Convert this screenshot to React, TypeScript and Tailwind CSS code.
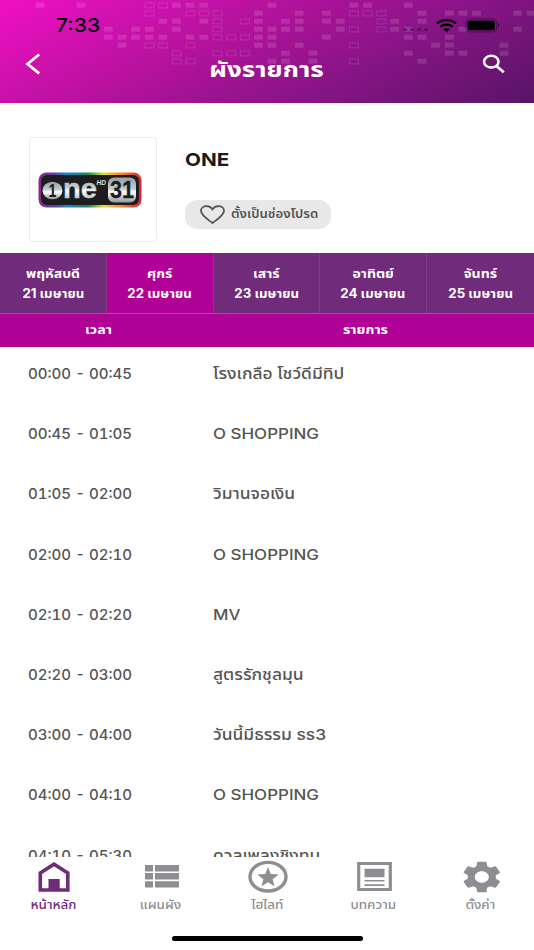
import React from "react";
import clsx from "clsx";

interface Day {
  name: string;
  date: string;
  active?: boolean;
}
interface Program {
  time: string;
  title: string;
}

const days: Day[] = [
  { name: "พฤหัสบดี", date: "21 เมษายน" },
  { name: "ศุกร์", date: "22 เมษายน", active: true },
  { name: "เสาร์", date: "23 เมษายน" },
  { name: "อาทิตย์", date: "24 เมษายน" },
  { name: "จันทร์", date: "25 เมษายน" },
];

const programs: Program[] = [
  { time: "00:00 - 00:45", title: "โรงเกลือ โชว์ดีมีทิป" },
  { time: "00:45 - 01:05", title: "O SHOPPING" },
  { time: "01:05 - 02:00", title: "วิมานจอเงิน" },
  { time: "02:00 - 02:10", title: "O SHOPPING" },
  { time: "02:10 - 02:20", title: "MV" },
  { time: "02:20 - 03:00", title: "สูตรรักชุลมุน" },
  { time: "03:00 - 04:00", title: "วันนี้มีธรรม ss3" },
  { time: "04:00 - 04:10", title: "O SHOPPING" },
  { time: "04:10 - 05:30", title: "ดวลเพลงชิงทุน" },
];

// column indexes of the small blocks in the header background
const pixels = [
  { row: 0, filled: [0, 3, 10, 11, 12, 17, 23, 24, 27], outlined: [8, 9] },
  { row: 1, filled: [16, 19, 21, 28, 30, 31, 32, 35, 36], outlined: [8, 11, 12, 13, 23, 24, 25] },
  { row: 2, filled: [9, 10, 12, 16, 18, 19, 21, 22, 26, 28], outlined: [13, 15, 25] },
  { row: 3, filled: [5, 7, 8, 10, 16, 17, 18, 19, 22, 26, 27, 31, 35], outlined: [13, 23, 25] },
  { row: 4, filled: [5, 6, 7, 8, 9, 11, 12, 16, 17, 21, 27, 28, 30], outlined: [13, 14, 15] },
  { row: 5, filled: [6, 16, 17, 19, 29, 30, 34], outlined: [8, 9, 11, 23] },
  { row: 6, filled: [18, 20, 27, 30, 31, 34], outlined: [10, 13, 14, 15] },
  { row: 7, filled: [17, 18, 20, 28], outlined: [10, 11, 23] },
];

function Header() {
  return (
    <header className="relative h-[103px] overflow-hidden bg-[linear-gradient(152deg,#f010c4_0%,#b9129f_36%,#861485_68%,#571565_100%)] text-white">
      <svg className="absolute inset-0" width="534" height="103" fill="#fff" stroke="#fff">
        {pixels.map(({ row, filled, outlined }) => (
          <g key={row}>
            {filled.map((c) => (
              <rect key={c} x={35.7 + c * 13.64} y={2.7 + row * 8} width="8.8" height="5" opacity="0.13" stroke="none" />
            ))}
            {outlined.map((c) => (
              <rect key={c} x={35.8 + c * 13.64} y={2.9 + row * 8} width="9" height="5" opacity="0.12" fill="none" />
            ))}
          </g>
        ))}
      </svg>
      <div className="relative flex h-[50px] items-center justify-between pr-[34px] pl-[56px] text-black">
        <span className="origin-left scale-x-[1.17] text-[18px] font-medium">7:33</span>
        <div className="flex items-center">
          <div className="mt-[9px] mr-2 flex gap-[3px]">
            {[0, 1, 2, 3].map((i) => (
              <i key={i} className="h-[3.5px] w-[4px] rounded-full bg-black/35" />
            ))}
          </div>
          <svg width="21" height="13" viewBox="0 0 21 13" fill="none" stroke="#000" strokeWidth="2.4">
            <path d="M1 4.4C6.2 0 14.8 0 20 4.4M4.3 7.7c3.4-2.8 9-2.8 12.4 0" />
            <path d="M7.2 10.3c1.9-1.5 4.7-1.5 6.6 0L10.5 13z" fill="#000" stroke="none" />
          </svg>
          <svg className="ml-2" width="35" height="15" viewBox="0 0 35 15">
            <rect x="0.7" y="0.7" width="31" height="13.2" rx="4" fill="none" stroke="#000" strokeOpacity=".4" />
            <rect x="2.4" y="2.4" width="27.5" height="9.8" rx="2.5" />
            <path d="M33 5v4.6c1.6-.6 1.6-4 0-4.6z" fillOpacity=".5" />
          </svg>
        </div>
      </div>
      <div className="relative flex h-[39px] items-center justify-between pr-[28px] pl-[25px]">
        <svg width="16" height="22" viewBox="0 0 16 22" className="-mt-3" fill="none" stroke="#fff" strokeWidth="2.8">
          <path d="M14.2 1.5 2.5 11l11.7 9.3" />
        </svg>
        <h1 className="-mt-px ml-[10px] scale-x-[1.18] text-[22px] leading-none font-bold">ผังรายการ</h1>
        <svg width="24" height="20" viewBox="0 0 24 20" className="-mt-3" fill="none" stroke="#fff" strokeWidth="2.5">
          <ellipse cx="9.3" cy="7.7" rx="7.2" ry="5.9" />
          <path d="m14.4 12 7.4 6.3" strokeWidth="2.8" />
        </svg>
      </div>
    </header>
  );
}

function ChannelLogo() {
  return (
    <div className="flex h-[105px] w-[128px] items-center rounded border-[1.5px] border-[#ececec] pl-[8px]">
      <svg width="104" height="36" viewBox="0 0 104 36" fontFamily="Liberation Sans, sans-serif" fontWeight="700">
        <defs>
          <linearGradient id="rainbow">
            <stop offset="0" stopColor="#8c2a8c" />
            <stop offset=".15" stopColor="#653b9b" />
            <stop offset=".28" stopColor="#1589cf" />
            <stop offset=".48" stopColor="#168854" />
            <stop offset=".63" stopColor="#dce234" />
            <stop offset=".82" stopColor="#f47e26" />
            <stop offset="1" stopColor="#d51f3a" />
          </linearGradient>
          <linearGradient id="chrome" x2="0" y2="1">
            <stop offset="0" stopColor="#999fa5" />
            <stop offset=".45" stopColor="#c3c9cd" />
            <stop offset=".58" stopColor="#fff" />
            <stop offset="1" stopColor="#92989e" />
          </linearGradient>
        </defs>
        <rect x="0.5" y="0.5" width="103" height="35" rx="8" fill="url(#rainbow)" />
        <rect x="3" y="3" width="98" height="30" rx="6" fill="#1d1d1f" />
        <ellipse cx="14.5" cy="18.5" rx="10" ry="8.7" fill="url(#chrome)" />
        <text x="10.5" y="25" fontSize="19" textLength="8" lengthAdjust="spacingAndGlyphs" fill="#1d1d1f">1</text>
        <text x="25" y="26" fontSize="28" textLength="34" lengthAdjust="spacingAndGlyphs" fill="url(#chrome)" stroke="#c3c9cd" strokeWidth=".5">ne</text>
        <text x="58.5" y="12.5" fontSize="6.5" fontStyle="italic" fill="#d5e5ef">HD</text>
        <rect x="70" y="5.5" width="28" height="25" rx="6" fill="url(#chrome)" />
        <text x="72" y="26" fontSize="23" textLength="24" lengthAdjust="spacingAndGlyphs" fill="#1d1d1f" stroke="#1d1d1f" strokeWidth=".3">31</text>
      </svg>
    </div>
  );
}

function Channel() {
  return (
    <section className="flex h-[150px] pt-[34px] pl-[29px]">
      <ChannelLogo />
      <div className="ml-7 flex flex-col items-start pt-3">
        <h2 className="origin-left scale-x-[1.15] text-[18px] leading-[22px] font-bold text-[#1b1b1b]">ONE</h2>
        <button className="mt-[29px] flex h-[29px] w-[146px] items-center rounded-[12px] bg-[#e8e8e8] pl-[15px] text-[#555]">
          <svg width="25" height="20" viewBox="0 0 25 20" fill="none" stroke="#555" strokeWidth="1.8">
            <path d="M12.5 18C7.5 14.2 1 10.4 1 5.8 1 3 3.6 1.2 6.6 1.2c2.5 0 4.6 1.1 5.9 3 1.3-1.9 3.4-3 5.9-3 3 0 5.6 1.8 5.6 4.6 0 4.6-6.5 8.4-11.5 12.2z" />
          </svg>
          <span className="-mt-0.5 ml-[6px] origin-left scale-x-[1.02] text-[13px] font-semibold whitespace-nowrap">
            ตั้งเป็นช่องโปรด
          </span>
        </button>
      </div>
    </section>
  );
}

const tabs = [
  {
    label: "หน้าหลัก",
    icon: (
      <>
        <path d="M4.3 29V12L18 3.2 31.8 12v17z" fill="none" stroke="currentColor" strokeWidth="3.6" />
        <path d="M12.5 18h11.2v11H12.5z" />
      </>
    ),
    active: true,
  },
  {
    label: "แผนผัง",
    icon: <path d="M2 4h8v6.4H2zm10 0h24v6.4H12zM2 12h8v6.4H2zm10 0h24v6.4H12zM2 20.2h8v6.4H2zm10 0h24v6.4H12z" />,
  },
  {
    label: "ไฮไลท์",
    icon: (
      <>
        <ellipse cx="18" cy="15.7" rx="18" ry="14.3" fill="none" stroke="currentColor" strokeWidth="3.4" />
        <path d="m18 6 2.8 7 8 .6-6.200 4.600 2 7-6.600-3.900-6.600 3.900 2-7-6.200-4.600 8-.6z" />
      </>
    ),
  },
  {
    label: "บทความ",
    icon: (
      <>
        <path d="M2.2 3.500h31.600v26H2.200z" transform="translate(-.5 -1)" fill="none" stroke="currentColor" strokeWidth="3.2" />
        <path d="M7.500 7.800h20v8.400h-20zM7.500 19h20v1.600h-20zM7.500 23.300h20v1.600h-20z" />
      </>
    ),
  },
  {
    label: "ตั้งค่า",
    icon: (
      <path
        transform="translate(-5.600 -3.200) scale(1.950 1.600)"
        d="M19.140 12.940c.04-.3.060-.61.060-.94 0-.32-.02-.64-.07-.94l2.030-1.580a.49.49 0 0 0 .12-.61l-1.920-3.320a.488.488 0 0 0-.59-.22l-2.390.96c-.5-.38-1.030-.7-1.620-.94l-.36-2.540a.484.484 0 0 0-.48-.41h-3.840c-.24 0-.43.17-.47.41l-.36 2.540c-.59.24-1.130.57-1.620.94l-2.390-.96c-.22-.08-.47 0-.59.22L2.740 8.870c-.12.21-.08.47.12.61l2.030 1.580c-.05.3-.09.63-.09.94s.02.64.07.94l-2.030 1.580a.49.49 0 0 0-.12.610l1.920 3.320c.12.22.37.29.59.22l2.390-.96c.5.38 1.030.7 1.620.94l.36 2.540c.05.24.24.41.48.41h3.840c.24 0 .44-.17.47-.41l.36-2.540c.59-.24 1.130-.56 1.620-.94l2.390.96c.22.08.47 0 .59-.22l1.920-3.320c.12-.22.070-.47-.12-.61l-2.010-1.580zM12 15.600c-1.980 0-3.600-1.620-3.600-3.600s1.620-3.600 3.600-3.600 3.600 1.620 3.600 3.600-1.620 3.600-3.600 3.600z"
      />
    ),
  },
];

export default function App() {
  return (
    <div className="flex h-[950px] w-[534px] flex-col overflow-hidden bg-white font-['Inter','Noto_Sans_Thai',sans-serif]">
      <Header />
      <Channel />
      <nav className="grid h-[60px] shrink-0 grid-cols-5 text-[13px] leading-5 font-bold text-white">
        {days.map((day) => (
          <button
            key={day.date}
            className={clsx(
              "flex flex-col items-center justify-center border-r border-[#833c89] pb-px last:border-r-0",
              day.active ? "bg-[#b10096]" : "bg-[#702b7a]"
            )}
          >
            <span className="scale-x-[1.08]">{day.name}</span>
            <span className="scale-x-[1.02]">{day.date}</span>
          </button>
        ))}
      </nav>
      <div className="flex h-[34px] shrink-0 items-center border-t border-[#bd3fae] bg-[#b10096] pb-[2px] text-center text-[13px] font-bold text-white">
        <span className="w-[197px] scale-x-[1.1]">เวลา</span>
        <span className="flex-1 scale-x-[1.1]">รายการ</span>
      </div>
      <main className="min-h-0 flex-1 overflow-hidden text-[15px] font-medium text-[#555]">
        {programs.map((program, i) => (
          <div key={i} className="flex h-[60.2px] items-start pt-[16px] pl-[28px] leading-[22px]">
            <div className="w-[185px]">
              <span className="inline-block origin-left scale-x-[1.04] text-[14.5px] tabular-nums">{program.time}</span>
            </div>
            <span
              className={clsx(
                "origin-left",
                /^[A-Z]/.test(program.title) ? "scale-x-[1.17] text-[14.5px]" : "scale-x-[1.16]"
              )}
            >
              {program.title}
            </span>
          </div>
        ))}
      </main>
      <footer className="h-[93px] shrink-0">
        <div className="flex h-[82px] justify-around pt-[4px]">
          {tabs.map((tab) => (
            <button
              key={tab.label}
              className={clsx("flex w-[107px] flex-col items-center", tab.active ? "text-[#702b7a]" : "text-[#8e8d92]")}
            >
              <svg width="38" height="32" viewBox="-2 0 38 32" fill="currentColor" className="overflow-visible">
                {tab.icon}
              </svg>
              <span className="mt-[3px] scale-x-[1.12] text-[12px] leading-[18px] font-medium">{tab.label}</span>
            </button>
          ))}
        </div>
        <div className="mx-auto h-[5px] w-[191px] -translate-y-[3px] rounded-full bg-black" />
      </footer>
    </div>
  );
}
